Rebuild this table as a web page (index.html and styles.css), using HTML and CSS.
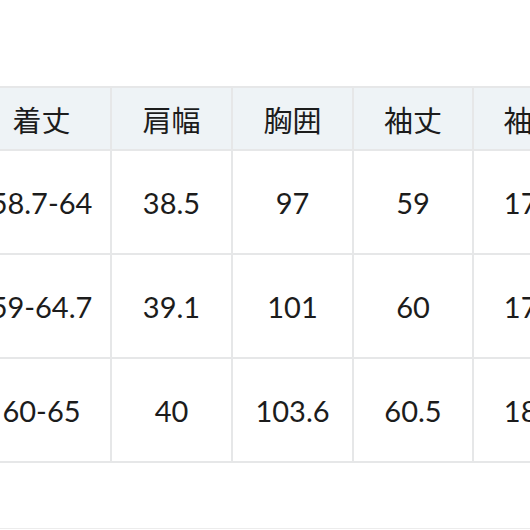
FILE: index.html
```html
<!DOCTYPE html>
<html lang="ja">
<head>
<meta charset="utf-8">
<link rel="stylesheet" href="styles.css">
</head>
<body>
<div class="frame">
  <table class="size-table">
    <colgroup>
      <col class="c1"><col class="c2"><col class="c3"><col class="c4"><col class="c5">
    </colgroup>
    <thead>
      <tr class="head">
        <th>着丈</th><th>肩幅</th><th>胸囲</th><th>袖丈</th><th>袖口</th>
      </tr>
    </thead>
    <tbody>
      <tr class="row"><td>58.7-64</td><td>38.5</td><td>97</td><td>59</td><td>17.5</td></tr>
      <tr class="row"><td>59-64.7</td><td>39.1</td><td>101</td><td>60</td><td>17.8</td></tr>
      <tr class="row"><td>60-65</td><td>40</td><td>103.6</td><td>60.5</td><td>18.2</td></tr>
    </tbody>
  </table>
  <div class="bottom-rule"></div>
</div>
</body>
</html>
```
FILE: styles.css
```css
html, body {
  margin: 0;
  padding: 0;
  background: #ffffff;
}
.frame {
  width: 530px;
  height: 530px;
  overflow: hidden;
  position: relative;
  padding-top: 86px;
  box-sizing: border-box;
}
.size-table {
  border-collapse: collapse;
  table-layout: fixed;
  width: 620px;
  margin-left: -29px;
  font-family: "Lato", "Noto Sans CJK JP", sans-serif;
  font-size: 29px;
  color: #1c1c1c;
}
.c1 { width: 139px; }
.c2 { width: 121px; }
.c3 { width: 121px; }
.c4 { width: 120px; }
.c5 { width: 119px; }
.size-table th,
.size-table td {
  border: 2px solid #e6e7e8;
  text-align: center;
  vertical-align: middle;
  padding: 0;
  white-space: nowrap;
  font-weight: 400;
}
.head th {
  height: 61px;
  background: #eef3f6;
  font-family: "Noto Sans CJK JP", sans-serif;
}
.row td {
  height: 102px;
}
.bottom-rule {
  position: absolute;
  left: 0;
  right: 0;
  bottom: 1px;
  height: 1px;
  background: #ececec;
}
```
